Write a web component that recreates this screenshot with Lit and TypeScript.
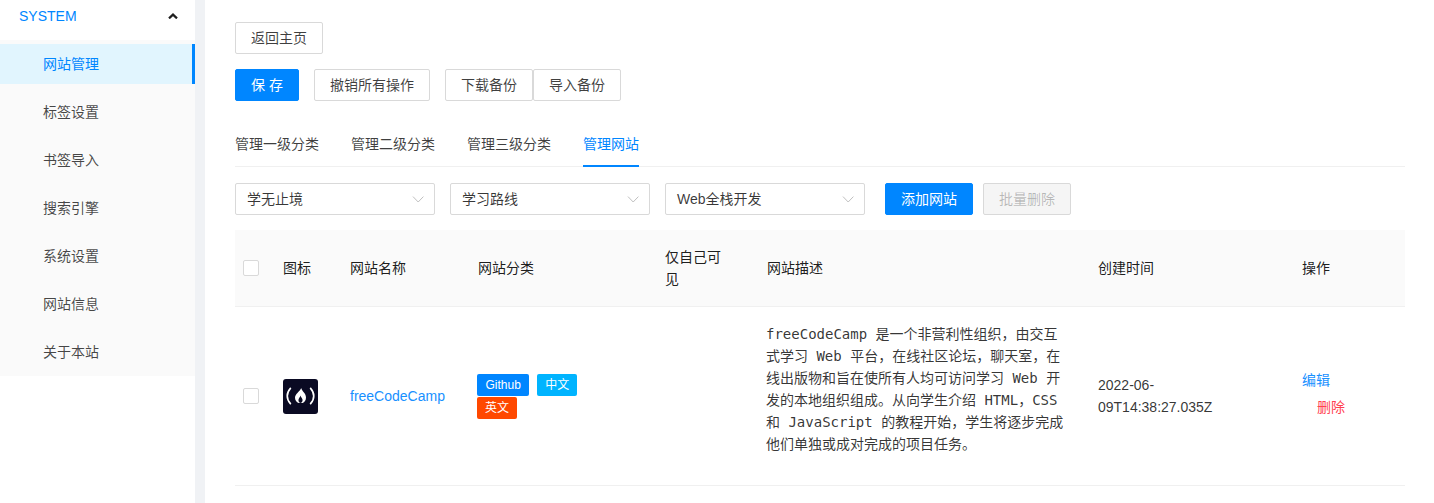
import { LitElement, html, css } from "lit";
import { customElement } from "lit/decorators.js";

const NAV = ["网站管理", "标签设置", "书签导入", "搜索引擎", "系统设置", "网站信息", "关于本站"];

@customElement("app-root")
export class AppRoot extends LitElement {
  static styles = css`
    :host {
      display: flex;
      width: 1434px;
      height: 503px;
      overflow: hidden;
      background: #fff;
      font-family: "Liberation Sans", "Noto Sans CJK SC", sans-serif;
      font-size: 14px;
      color: rgba(0, 0, 0, 0.8);
      line-height: 22px;
    }
    * { box-sizing: border-box; }
    .side { width: 195px; flex: none; background: #fff; }
    .sub {
      height: 40px;
      display: flex;
      align-items: center;
      justify-content: space-between;
      padding: 0 17px 8px 19px;
      color: #0086ff;
      line-height: 32px;
    }
    .menu { background: #fafafa; padding: 4px 0; margin: 0; list-style: none; }
    .menu li {
      height: 40px;
      margin-bottom: 8px;
      padding-left: 43px;
      line-height: 40px;
      color: rgba(0, 0, 0, 0.72);
    }
    .menu li:last-child { margin-bottom: 0; }
    .menu li.on { background: #e1f5fe; color: #0086ff; border-right: 3px solid #0086ff; }
    .strip { width: 10px; flex: none; background: #f0f2f5; }
    .main { flex: 1; min-width: 0; padding: 22px 29px 0 30px; }
    .btn {
      display: inline-block;
      height: 32px;
      padding: 0 15px;
      border: 1px solid #d9d9d9;
      border-radius: 2px;
      background: #fff;
      color: rgba(0, 0, 0, 0.75);
      font: inherit;
      line-height: 30px;
      white-space: nowrap;
    }
    .primary { background: #0086ff; border-color: #0086ff; color: #fff; }
    .disabled { background: #f5f5f5; color: rgba(0, 0, 0, 0.25); }
    .row { display: flex; }
    .actions { margin-top: 15px; }
    .save { margin-right: 15px; }
    .undo { margin-right: 15px; }
    .tabs {
      display: flex;
      gap: 32px;
      margin-top: 21px;
      height: 45px;
      border-bottom: 1px solid #f0f0f0;
    }
    .tab { padding-top: 11px; height: 45px; color: rgba(0, 0, 0, 0.75); }
    .tab.on { color: #0086ff; border-bottom: 2px solid #0086ff; }
    .filters { margin-top: 16px; display: flex; }
    .select {
      width: 200px;
      height: 32px;
      margin-right: 15px;
      padding: 0 10px 0 11px;
      border: 1px solid #d9d9d9;
      border-radius: 2px;
      display: flex;
      align-items: center;
      justify-content: space-between;
      line-height: 30px;
      color: rgba(0, 0, 0, 0.78);
    }
    .select svg { width: 12px; height: 12px; }
    .add { margin-left: 5px; margin-right: 10px; }
    table {
      width: 1170px;
      margin-top: 15px;
      border-collapse: collapse;
      table-layout: fixed;
    }
    .c1 { width: 32px; } .c2 { width: 67px; } .c3 { width: 128px; } .c4 { width: 187px; }
    .c5 { width: 102px; } .c6 { width: 331px; } .c7 { width: 204px; } .c8 { width: 119px; }
    th {
      height: 76px;
      padding: 0 16px;
      background: #fafafa;
      text-align: left;
      font-weight: 400;
      line-height: 22px;
      border-bottom: 1px solid #f0f0f0;
      color: rgba(0, 0, 0, 0.9);
    }
    th.narrow { padding-right: 20px; }
    td {
      height: 179px;
      padding: 0 16px;
      border-bottom: 1px solid #f0f0f0;
      line-height: 25px;
    }
    td.mid { padding-top: 2px; }
    th.check, td.check { padding: 0 0 0 8px; }
    .box {
      display: block;
      width: 16px;
      height: 16px;
      border: 1px solid #d9d9d9;
      border-radius: 2px;
      background: #fff;
    }
    .logo { display: block; width: 35px; height: 35px; border-radius: 3px; }
    .name { color: #1890ff; white-space: nowrap; }
    .tags { display: flex; flex-wrap: wrap; gap: 1px 8px; margin-left: -1px; width: 110px; }
    .tag {
      height: 22px;
      padding: 0 8px;
      border-radius: 2px;
      color: #fff;
      font-size: 12px;
      line-height: 22px;
    }
    .t1 { background: #0086ff; padding: 0 8.5px; }
    .t2 { background: #00b4ff; }
    .t3 { background: #ff4800; }
    td.desc {
      font-family: "DejaVu Sans Mono", "Noto Sans CJK SC", monospace;
      color: rgba(0, 0, 0, 0.8);
      line-height: 22px;
      padding: 0 11px 14px 15px;
    }
    td.time { line-height: 22px; padding-right: 30px; word-break: break-word; }
    .ops { display: flex; flex-direction: column; align-items: flex-start; line-height: 27px; margin-top: -4px; }
    .edit { color: #1890ff; }
    .del { color: #ff4050; margin-left: 15px; }
  `;

  render() {
    const chevron = html`<svg viewBox="0 0 12 12" fill="none" stroke="#bfbfbf" stroke-width="1"><path d="M1 3.6 6.2 9l5.2-5.4"/></svg>`;
    return html`
      <aside class="side">
        <div class="sub">
          <span>SYSTEM</span>
          <svg width="10" height="6" viewBox="0 0 10 6" fill="none" stroke="#1f1f1f" stroke-width="2.2"><path d="M1 5.4 5 1.6l4 3.8"/></svg>
        </div>
        <ul class="menu">
          ${NAV.map((n, i) => html`<li class=${i === 0 ? "on" : ""}>${n}</li>`)}
        </ul>
      </aside>
      <div class="strip"></div>
      <main class="main">
        <div class="row"><span class="btn">返回主页</span></div>
        <div class="row actions">
          <span class="btn primary save">保 存</span>
          <span class="btn undo">撤销所有操作</span>
          <span class="btn">下载备份</span>
          <span class="btn">导入备份</span>
        </div>
        <div class="tabs">
          <div class="tab">管理一级分类</div>
          <div class="tab">管理二级分类</div>
          <div class="tab">管理三级分类</div>
          <div class="tab on">管理网站</div>
        </div>
        <div class="filters">
          <div class="select"><span>学无止境</span>${chevron}</div>
          <div class="select"><span>学习路线</span>${chevron}</div>
          <div class="select"><span>Web全栈开发</span>${chevron}</div>
          <span class="btn primary add">添加网站</span>
          <span class="btn disabled">批量删除</span>
        </div>
        <table>
          <colgroup>
            <col class="c1" /><col class="c2" /><col class="c3" /><col class="c4" />
            <col class="c5" /><col class="c6" /><col class="c7" /><col class="c8" />
          </colgroup>
          <thead>
            <tr>
              <th class="check"><span class="box"></span></th>
              <th>图标</th>
              <th>网站名称</th>
              <th>网站分类</th>
              <th class="narrow">仅自己可见</th>
              <th>网站描述</th>
              <th>创建时间</th>
              <th>操作</th>
            </tr>
          </thead>
          <tbody>
            <tr>
              <td class="check"><span class="box"></span></td>
              <td class="mid">
                <svg class="logo" viewBox="0 0 35 35">
                  <rect width="35" height="35" fill="#0a0a23"/>
                  <g fill="none" stroke="#fff" stroke-width="1.7" stroke-linecap="round">
                    <path d="M7.4 9.4C3.2 14 3.2 20 7.4 24.6"/>
                    <path d="M27.6 9.4C31.8 14 31.8 20 27.6 24.6"/>
                  </g>
                  <path fill="#fff" fill-rule="evenodd" d="M18.2 9C18.6 12 23 14 23 18.6 23 21.4 21.5 23.3 19.6 24H15.6C13.6 23.3 12 21.4 12 18.8 12 15 16.5 13 18.2 9ZM17.6 16.5C17.2 18 16.2 18.6 15.6 20.2 15.1 21.6 15.8 23.4 17.5 24 19.2 23.4 20 21.6 19.4 20.2 18.9 19 17.9 18 17.6 16.5Z"/>
                </svg>
              </td>
              <td class="mid"><span class="name">freeCodeCamp</span></td>
              <td class="mid">
                <div class="tags">
                  <span class="tag t1">Github</span>
                  <span class="tag t2">中文</span>
                  <span class="tag t3">英文</span>
                </div>
              </td>
              <td></td>
              <td class="desc">freeCodeCamp 是一个非营利性组织，由交互式学习 Web 平台，在线社区论坛，聊天室，在线出版物和旨在使所有人均可访问学习 Web 开发的本地组织组成。从向学生介绍 HTML，CSS 和 JavaScript 的教程开始，学生将逐步完成他们单独或成对完成的项目任务。</td>
              <td class="time">2022-06-09T14:38:27.035Z</td>
              <td>
                <div class="ops">
                  <span class="edit">编辑</span>
                  <span class="del">删除</span>
                </div>
              </td>
            </tr>
          </tbody>
        </table>
      </main>
    `;
  }
}
